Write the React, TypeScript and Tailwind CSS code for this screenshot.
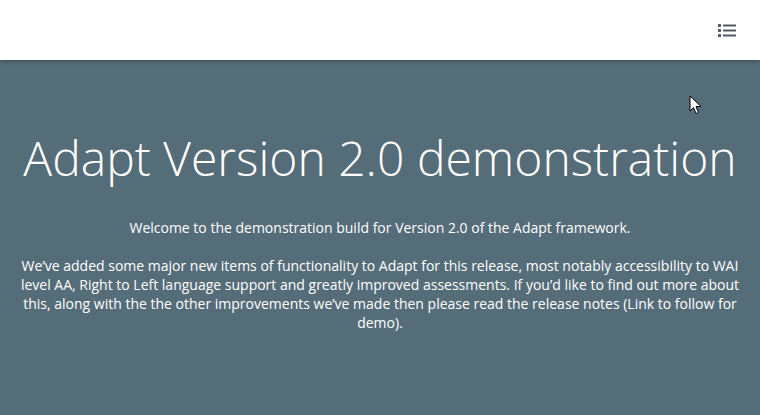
import React from "react";

const font = { fontFamily: '"Open Sans", "Liberation Sans", sans-serif' };

// menu / index icon in the top bar
const ListIcon = () => (
  <svg width="18" height="14" viewBox="0 0 18 14" className="text-[#4f5a61]">
    <rect x="0" y="1" width="3" height="3" rx="0.5" fill="currentColor" />
    <rect x="0" y="6" width="3" height="3" rx="0.5" fill="currentColor" />
    <rect x="0" y="11" width="3" height="3" rx="0.5" fill="currentColor" />
    <rect x="5" y="1.5" width="13" height="2" fill="currentColor" />
    <rect x="5" y="6.5" width="13" height="2" fill="currentColor" />
    <rect x="5" y="11.5" width="13" height="2" fill="currentColor" />
  </svg>
);

const Cursor = () => (
  <svg width="14" height="20" viewBox="0 0 14 20" className="absolute left-[689px] top-[95px]">
    <path d="M1 1 L1 16 L4.5 12.5 L7 18.5 L9.5 17.5 L7 11.5 L12 11.5 Z" fill="#fff" stroke="#000" strokeWidth="1" strokeLinejoin="round" />
  </svg>
);

function App() {
  return (
    <div className="relative w-[760px] h-[415px] overflow-hidden bg-[#556c79]" style={font}>
      <header className="relative z-10 h-[60px] bg-white flex items-center justify-end pr-[24px] shadow-[0_1px_4px_rgba(0,0,0,0.35)]">
        <ListIcon />
      </header>

      <main className="px-[20px] pt-[70px] text-white text-center">
        <h1 className="text-[48px] leading-[55px] font-light">Adapt Version 2.0 demonstration</h1>
        <div className="mt-[33px] text-[14px] leading-[19px]">
          <p>Welcome to the demonstration build for Version 2.0 of the Adapt framework.</p>
          <p className="mt-[19px]">
            We’ve added some major new items of functionality to Adapt for this release, most notably accessibility to WAI
            level AA, Right to Left language support and greatly improved assessments. If you’d like to find out more about
            this, along with the the other improvements we’ve made then please read the release notes (Link to follow for
            demo).
          </p>
        </div>
      </main>

      <Cursor />
    </div>
  );
}

export default App;
